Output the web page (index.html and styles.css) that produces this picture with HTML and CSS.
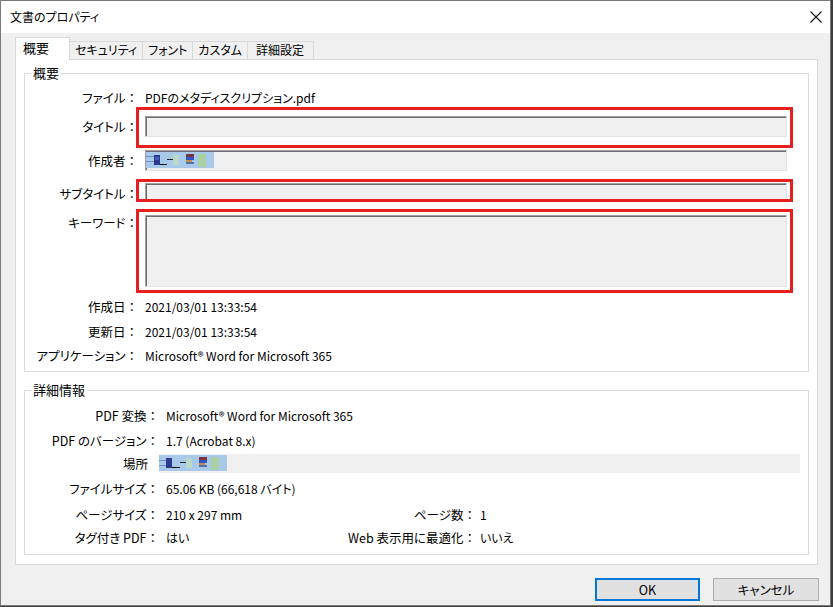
FILE: index.html
```html
<!DOCTYPE html>
<html lang="ja">
<head>
  <meta charset="UTF-8" />
  <title>文書のプロパティ</title>
  <link rel="stylesheet" href="styles.css">
</head>
<body>
  <div class="window">
    <div class="titlebar">
      <span class="title">文書のプロパティ</span>
      <svg class="close" width="12" height="12" viewBox="0 0 12 12">
        <path d="M0.5 0.5L11.5 11.5M11.5 0.5L0.5 11.5" stroke="#111" stroke-width="1.1" fill="none"/>
      </svg>
    </div>

    <div class="content">
      <div class="tabs">
        <div class="tab active">概要</div>
        <div class="tab">セキュリティ</div>
        <div class="tab">フォント</div>
        <div class="tab">カスタム</div>
        <div class="tab">詳細設定</div>
      </div>

      <div class="panel">
        <!-- 概要 -->
        <fieldset class="group summary">
          <legend>概要</legend>
          <div class="summary-rows">
            <div class="label">ファイル</div>
            <div class="value">PDFのメタディスクリプション.pdf</div>

            <div class="label">タイトル</div>
            <div class="field"><span class="mark mark-title"></span></div>

            <div class="label">作成者</div>
            <div class="field">
              <svg class="blur" width="68" height="16" viewBox="0 0 68 16">
                <rect x="0" y="0" width="68" height="16" fill="#a9c9eb"/>
                <rect x="0" y="4" width="8" height="1" fill="#6f8fbc"/>
                <rect x="0" y="9" width="8" height="1" fill="#6f8fbc"/>
                <rect x="8" y="3" width="6" height="10" fill="#2b3a8c"/>
                <rect x="9" y="5" width="4" height="3" fill="#4b5cb4"/>
                <rect x="14" y="12" width="7" height="1" fill="#111"/>
                <rect x="21" y="7" width="6" height="1" fill="#222"/>
                <rect x="27" y="3" width="6" height="10" fill="#b9d9c6"/>
                <rect x="40" y="2" width="8" height="3" fill="#7a3545"/>
                <rect x="40" y="5" width="8" height="3" fill="#3355c4"/>
                <rect x="40" y="8" width="6" height="2" fill="#c48a4a"/>
                <rect x="40" y="10" width="8" height="2" fill="#5572a6"/>
                <rect x="52" y="2" width="8" height="13" fill="#a9d1a4"/>
              </svg>
            </div>

            <div class="label low">サブタイトル</div>
            <div class="field short"><span class="mark mark-sub"></span></div>

            <div class="label top">キーワード</div>
            <div class="field tall"><span class="mark mark-kw"></span></div>

            <div class="label">作成日</div>
            <div class="value">2021/03/01 13:33:54</div>

            <div class="label">更新日</div>
            <div class="value">2021/03/01 13:33:54</div>

            <div class="label">アプリケーション</div>
            <div class="value">Microsoft® Word for Microsoft 365</div>
          </div>
        </fieldset>

        <!-- 詳細情報 -->
        <fieldset class="group detail">
          <legend>詳細情報</legend>
          <div class="detail-rows">
            <div class="label">PDF 変換</div>
            <div class="value wide">Microsoft® Word for Microsoft 365</div>

            <div class="label">PDF のバージョン</div>
            <div class="value wide">1.7 (Acrobat 8.x)</div>

            <div class="label plain">場所</div>
            <div class="field flat wide">
              <svg class="blur" width="68" height="16" viewBox="0 0 68 16">
                <rect x="0" y="0" width="68" height="16" fill="#a9c9eb"/>
                <rect x="0" y="5" width="7" height="1" fill="#6f8fbc"/>
                <rect x="0" y="10" width="7" height="1" fill="#6f8fbc"/>
                <rect x="7" y="3" width="6" height="10" fill="#2b3a8c"/>
                <rect x="13" y="12" width="8" height="1" fill="#111"/>
                <rect x="21" y="7" width="6" height="1" fill="#222"/>
                <rect x="27" y="3" width="6" height="10" fill="#b9d9c6"/>
                <rect x="40" y="2" width="8" height="3" fill="#7a3545"/>
                <rect x="40" y="5" width="8" height="3" fill="#3355c4"/>
                <rect x="40" y="8" width="6" height="2" fill="#c48a4a"/>
                <rect x="40" y="10" width="8" height="2" fill="#5572a6"/>
                <rect x="52" y="2" width="8" height="13" fill="#a9d1a4"/>
              </svg>
            </div>

            <div class="label">ファイルサイズ</div>
            <div class="value wide">65.06 KB (66,618 バイト)</div>

            <div class="label">ページサイズ</div>
            <div class="value">210 x 297 mm</div>
            <div class="label side">ページ数</div>
            <div class="value">1</div>

            <div class="label">タグ付き PDF</div>
            <div class="value">はい</div>
            <div class="label side">Web 表示用に最適化</div>
            <div class="value">いいえ</div>
          </div>
        </fieldset>
      </div>

      <div class="buttons">
        <button class="btn default">OK</button>
        <button class="btn cancel">キャンセル</button>
      </div>
    </div>
  </div>
</body>
</html>
```

FILE: styles.css
```css
* { margin: 0; padding: 0; box-sizing: border-box; }

body {
  background-color: #3c3c3c;
  font-family: "Noto Sans CJK JP", sans-serif;
  font-size: 12.5px;
  color: #000;
  font-feature-settings: "palt";
}

.window {
  width: 831px;
  height: 606px;
  border: 1px solid #7a7a7a;
  background-color: #f0f0f0;
  display: flex;
  flex-direction: column;
}

.titlebar {
  height: 32px;
  background-color: #fff;
  display: flex;
  align-items: center;
  justify-content: space-between;
  padding: 0 8px 0 9px;
}

.title { font-size: 12px; line-height: 16px; }
.close { display: block; }

/* tabs */
.tabs {
  display: flex;
  align-items: flex-end;
  height: 26px;
  padding-left: 14px;
}

.tab {
  height: 18px;
  padding: 0 5px;
  margin-left: -1px;
  border: 1px solid #d9d9d9;
  border-bottom: none;
  background-color: #f0f0f0;
  font-size: 12px;
  line-height: 16px;
  white-space: nowrap;
}

.tab:last-child { padding: 0 9px 0 8px; }

.tab.active {
  position: relative;
  width: 55px;
  height: 23px;
  margin-left: 0;
  margin-bottom: -1px;
  padding: 1px 0 0 7px;
  background-color: #fff;
  font-size: 13px;
  line-height: 18px;
}

.panel {
  background-color: #fff;
  border: 1px solid #d9d9d9;
  margin: 0 12px 0 14px;
  padding: 5px 8px 9px;
}

/* group boxes */
.group {
  border: 1px solid #dcdcdc;
  min-width: 0;
}

.group legend {
  margin-left: 6px;
  padding: 0 2px;
  font-size: 13px;
  line-height: 16px;
}

.summary { padding: 7px 21px 4px 0; }
.detail { margin-top: 10px; padding: 6px 0 3px; }

.summary-rows {
  display: grid;
  grid-template-columns: 113px 1fr;
  column-gap: 7px;
  grid-template-rows: 20px 37px 31px 31px 88px 24px 26px 22px;
  align-items: center;
}

.detail-rows {
  display: grid;
  grid-template-columns: 141px 170px 144px 1fr;
  grid-template-rows: 24px 26px 19px 32px 20px 26px;
  align-items: center;
}

.label {
  text-align: right;
  line-height: 16px;
  white-space: nowrap;
}

.label::after {
  content: "：";
  font-feature-settings: normal;
}

.label.plain::after { content: none; }

.label.low { margin-top: 5px; }
.label.top { align-self: start; margin-top: 8px; }

.detail-rows .label { padding-right: 7px; }
.detail-rows .label.side { padding-right: 4px; }
.detail-rows .label.plain { padding-right: 18px; }

.value {
  font-size: 12px;
  line-height: 16px;
  white-space: nowrap;
}

.wide { grid-column: 2 / -1; }

/* read-only edit boxes */
.field {
  position: relative;
  height: 21px;
  background-color: #f0f0f0;
  border: 1px solid;
  border-color: #a0a0a0 #e3e3e3 #e3e3e3 #a0a0a0;
  box-shadow: inset 1px 1px 0 #6d6d6d;
}

.field.short { height: 18px; }
.field.tall { height: 72px; }

.field.flat {
  height: 19px;
  border: none;
  box-shadow: none;
  margin: 0 8px 0 -7px;
}

.blur { display: block; margin-top: 1px; }

/* red highlight boxes */
.mark {
  position: absolute;
  border: 3px solid #e5201f;
}

.mark-title { top: -10px; left: -10px; right: -7px; bottom: -12px; }
.mark-sub { top: -5px; left: -10px; right: -7px; bottom: -2px; }
.mark-kw { top: -7px; left: -10px; right: -7px; bottom: -7px; }

/* buttons */
.buttons {
  display: flex;
  justify-content: flex-end;
  gap: 13px;
  padding: 13px 11px 0 0;
}

.btn {
  width: 105px;
  height: 23px;
  background-color: #e1e1e1;
  border: 1px solid #adadad;
  font: inherit;
  color: #000;
  line-height: 19px;
}

.btn.default { border: 2px solid #0078d7; }
.btn.cancel { width: 106px; }
```
